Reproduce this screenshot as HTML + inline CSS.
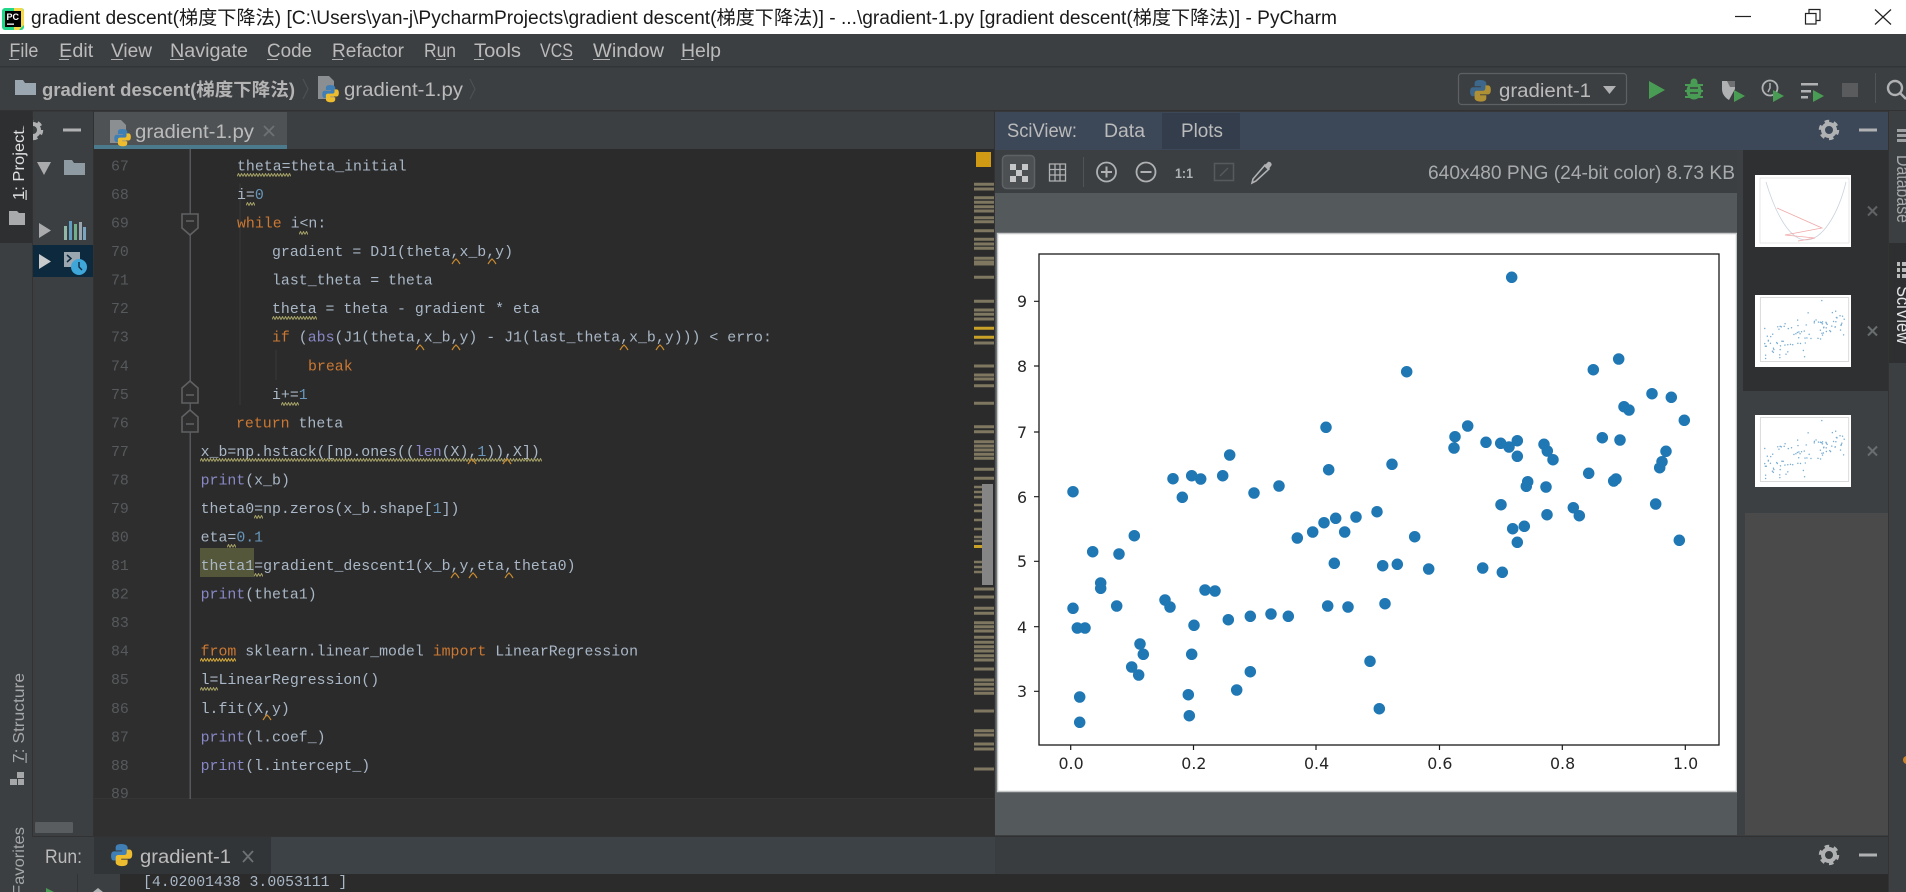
<!DOCTYPE html>
<html><head><meta charset="utf-8"><title>gradient descent - PyCharm</title>
<style>
html,body{margin:0;padding:0;background:#3c3f41;width:1906px;height:892px;overflow:hidden}
svg{display:block}
text{font-family:"Liberation Sans","Noto Sans CJK SC",sans-serif;white-space:pre}
.ui{fill:#bbbbbb;font-size:19px}
.code text{font-family:"Liberation Mono","Noto Sans CJK SC",monospace;font-size:14.88px;fill:#a9b7c6}
.ln text{font-family:"Liberation Mono",monospace;font-size:14.88px;fill:#565a5d}
.k{fill:#cc7832}.n{fill:#6897bb}.b{fill:#8888c6}
.plot text{font-family:"DejaVu Sans",sans-serif;font-size:15.8px;fill:#262626}
</style></head><body>
<svg width="1906" height="892" viewBox="0 0 1906 892" xmlns="http://www.w3.org/2000/svg">
<defs>
<g id="py"><path d="M10 0C5 0 4 2 4 4v3h7v1H2C0 8-1 10-1 13s1 5 3 5h3v-3c0-2 1-3 3-3h6c2 0 3-1 3-3V4c0-2-2-4-7-4z" fill="#3f7fb5"/><path d="M11 24c5 0 6-2 6-4v-3h-7v-1h9c2 0 3-2 3-5s-1-5-3-5h-3v3c0 2-1 3-3 3H7c-2 0-3 1-3 3v5c0 2 2 4 7 4z" fill="#eebc2f"/></g>
<g id="pyf"><path d="M0 0h11l5 5v18H0z" fill="#8c8f91"/><use href="#py" transform="translate(5 9) scale(.72)"/></g>
<g id="gear"><circle r="6" fill="none" stroke="#afb1b3" stroke-width="4"/><circle r="8.5" fill="none" stroke="#afb1b3" stroke-width="3.5" stroke-dasharray="4.4 4.5"/></g>
<g id="fold"><path d="M-8 -6L0 -13L8 -6V9H-8z" fill="#2f2f2f" stroke="#5f6163" stroke-width="1.6"/><path d="M-4 1H4" stroke="#5f6163" stroke-width="1.6"/></g>
<g id="foldd"><path d="M-8 -9H8V5L0 12L-8 5z" fill="#2f2f2f" stroke="#5f6163" stroke-width="1.6"/><path d="M-4 -2H4" stroke="#5f6163" stroke-width="1.6"/></g>
<path id="c" d="M-4 4L-2 1L0 -1L2 1L4 4" fill="none" stroke="#c98a2e" stroke-width="1.2"/>
<pattern id="w" width="6" height="4" patternUnits="userSpaceOnUse"><path d="M0 3.4L1.5 .6L3 3.4L4.5 .6L6 3.4" fill="none" stroke="#9d9a62" stroke-width="1.1"/></pattern>
<pattern id="wo" width="6" height="4" patternUnits="userSpaceOnUse"><path d="M0 3.4L1.5 .6L3 3.4L4.5 .6L6 3.4" fill="none" stroke="#c9a13a" stroke-width="1.1"/></pattern>
<path id="pts" fill="none" stroke="#1f77b4" stroke-width="11.5" stroke-linecap="round" d="M1073 491.7h0M1173 478.7h0M1191.7 475.7h0M1200.7 479h0M1222.7 475.7h0M1229.7 455h0M1182.3 497.3h0M1254 493h0M1279 486h0M1326 427.3h0M1328.7 469.7h0M1392 464.3h0M1406.7 371.7h0M1134.3 535.7h0M1092.7 551.7h0M1119 554h0M1100.7 583h0M1100.7 588.3h0M1073 608.3h0M1116.7 606h0M1077.3 628h0M1085 628h0M1165 600h0M1170 607h0M1205 590h0M1215 591h0M1194 625.3h0M1228.3 619.7h0M1250.3 616.3h0M1271 614h0M1288.3 616.3h0M1140 644h0M1143.3 654.3h0M1131.7 667h0M1138.7 675h0M1191.7 654.3h0M1250.3 671.7h0M1236.7 690h0M1188.3 694.7h0M1189.3 715.7h0M1079.7 697h0M1079.7 722.3h0M1297.3 538h0M1312.7 532h0M1324 522.7h0M1335.7 518.3h0M1344.7 532h0M1356 517h0M1377 511.7h0M1414.7 536.7h0M1334.3 563.3h0M1382.7 565.7h0M1397.3 564.3h0M1428.7 569h0M1327.7 606h0M1348 607h0M1385 603.7h0M1370 661.3h0M1379.3 708.7h0M1511.7 277.3h0M1593.3 369.7h0M1618.7 359h0M1652 393.7h0M1671.3 397.3h0M1624 406.7h0M1629 410h0M1684.3 420.3h0M1467.7 426h0M1455 436.7h0M1454 448h0M1486 442.3h0M1500.7 443.3h0M1509 447h0M1517.3 440.7h0M1517.3 456.3h0M1544 444.3h0M1547.3 451h0M1553 459.7h0M1602.3 437.7h0M1620 440h0M1666 451.3h0M1662 461.7h0M1659.7 467.7h0M1527.7 481.7h0M1526.3 486.3h0M1546 487h0M1588.7 473.3h0M1616 479h0M1613.7 481h0M1501 504.7h0M1655.7 504h0M1547 514.7h0M1573.3 507.7h0M1579.3 515.7h0M1512.7 528.7h0M1524.3 526.3h0M1517.3 542.3h0M1679.3 540.3h0M1482.7 568h0M1502.3 572.3h0"/>
</defs>

<!-- base -->
<rect width="1906" height="892" fill="#3c3f41"/>

<!-- title bar -->
<rect width="1906" height="34" fill="#fff"/>
<rect x="2" y="8" width="22" height="22" rx="3" fill="#21d789"/><path d="M14 8h8l2 3v14l-5 5h-5z" fill="#f5d94a"/>
<rect x="5" y="11" width="16" height="16" fill="#000"/>
<text x="6.5" y="20" font-size="9" font-weight="bold" fill="#fff">PC</text><rect x="7" y="23.5" width="7" height="1.3" fill="#fff"/>
<text x="31" y="24" font-size="19" fill="#1a1a1a" textLength="1306" lengthAdjust="spacingAndGlyphs">gradient descent(梯度下降法) [C:\Users\yan-j\PycharmProjects\gradient descent(梯度下降法)] - ...\gradient-1.py [gradient descent(梯度下降法)] - PyCharm</text>
<path d="M1735 16.5h16" stroke="#222" stroke-width="1.2"/>
<path d="M1805.5 13.5h10.5v10.5h-10.5zM1809 13.5v-4h11v11h-4" fill="none" stroke="#222" stroke-width="1.2"/>
<path d="M1875 9.5l16 15M1891 9.5l-16 15" stroke="#222" stroke-width="1.2"/>

<!-- menu -->
<g class="ui">
<text x="9.4" y="57" textLength="29" lengthAdjust="spacingAndGlyphs">File</text>
<text x="59.2" y="57" textLength="34" lengthAdjust="spacingAndGlyphs">Edit</text>
<text x="111" y="57" textLength="41" lengthAdjust="spacingAndGlyphs">View</text>
<text x="170" y="57" textLength="78" lengthAdjust="spacingAndGlyphs">Navigate</text>
<text x="267" y="57" textLength="45" lengthAdjust="spacingAndGlyphs">Code</text>
<text x="332" y="57" textLength="72" lengthAdjust="spacingAndGlyphs">Refactor</text>
<text x="424" y="57" textLength="32" lengthAdjust="spacingAndGlyphs">Run</text>
<text x="474" y="57" textLength="47" lengthAdjust="spacingAndGlyphs">Tools</text>
<text x="540" y="57" textLength="33" lengthAdjust="spacingAndGlyphs">VCS</text>
<text x="593" y="57" textLength="71" lengthAdjust="spacingAndGlyphs">Window</text>
<text x="681" y="57" textLength="40" lengthAdjust="spacingAndGlyphs">Help</text>
</g>
<path d="M9 59.5h10M59 59.5h10M111 59.5h12M170 59.5h14M267 59.5h11M332 59.5h11M436 59.5h10M474 59.5h10M561 59.5h12M593 59.5h17M681 59.5h13" stroke="#b0b0b0" stroke-width="1"/>
<rect y="66" width="1906" height="1.5" fill="#323537"/>

<!-- nav bar -->
<path d="M15 80h8l2 3h11v12H15z" fill="#9aa7b0"/>
<text x="42" y="96" font-size="18" font-weight="bold" fill="#b4b4b4" textLength="253" lengthAdjust="spacingAndGlyphs">gradient descent(梯度下降法)</text>
<path d="M303 79l5 10-5 10" fill="none" stroke="#4c4f51" stroke-width="1.3"/>
<use href="#pyf" transform="translate(318 76)"/>
<text x="344" y="96" class="ui" textLength="119" lengthAdjust="spacingAndGlyphs">gradient-1.py</text>
<path d="M470 79l5 10-5 10" fill="none" stroke="#4c4f51" stroke-width="1.3"/>
<rect x="1458.5" y="73.5" width="168" height="31" rx="3" fill="#3c3f41" stroke="#5e6163" stroke-width="1.2"/>
<use href="#py" transform="translate(1471 80) scale(.9)" opacity=".65"/>
<text x="1499" y="97" class="ui" textLength="92" lengthAdjust="spacingAndGlyphs">gradient-1</text>
<path d="M1603 86h13l-6.500 8z" fill="#afb1b3"/>
<path d="M1649 81l16 9-16 9z" fill="#499c54"/>
<g fill="#499c54"><ellipse cx="1694" cy="91" rx="7.500" ry="8.500"/><circle cx="1694" cy="82" r="3.500"/><path d="M1685 85h18M1685 91h18M1685 97h18" stroke="#499c54" stroke-width="2"/></g>
<path d="M1690 88h8M1690 93h8" stroke="#3c3f41" stroke-width="1.500"/>
<path d="M1722 81h13v8l-6 11c-5-3-7-7-7-11z" fill="#afb1b3"/><path d="M1727 81h8v6h-5z" fill="#6e7072"/><path d="M1734 90l11 6-11 6z" fill="#499c54"/>
<circle cx="1770" cy="88" r="7.500" fill="none" stroke="#afb1b3" stroke-width="1.800"/><path d="M1770 83v5l-2 4" stroke="#afb1b3" stroke-width="1.500" fill="none"/><path d="M1773 90l11 6-11 6z" fill="#499c54"/>
<path d="M1801 83h17v2.500h-17zM1801 90h10v2.500h-10zM1801 96h7v2.500h-7z" fill="#afb1b3"/><path d="M1813 90l11 6-11 6z" fill="#499c54"/>
<rect x="1842" y="83" width="16" height="14" fill="#5a5b5c"/>
<rect x="1875" y="73" width="1" height="30" fill="#515456"/>
<circle cx="1895" cy="88" r="7" fill="none" stroke="#afb1b3" stroke-width="2.400"/><path d="M1900 93l6 6" stroke="#afb1b3" stroke-width="2.400"/>
<rect y="110" width="1906" height="1.500" fill="#323232"/>

<!-- left stripe -->
<rect x="0" y="111" width="32" height="132" fill="#2d2f31"/>
<rect x="32" y="111" width="1" height="726" fill="#323232"/>
<text transform="translate(24 200) rotate(-90)" font-size="16" fill="#e0e0e0" textLength="70" lengthAdjust="spacingAndGlyphs">1: Project</text>
<rect x="25.500" y="190" width="1.200" height="10" fill="#e0e0e0"/>
<path d="M9 211h8l2 2h6v12H9z" fill="#a8aaac"/>
<text transform="translate(24 763) rotate(-90)" font-size="16" fill="#a5a7a9" textLength="90" lengthAdjust="spacingAndGlyphs">7: Structure</text>
<rect x="25.500" y="753" width="1.200" height="10" fill="#a5a7a9"/>
<path d="M17 772h7v6h-7zM10 779h7v6h-7zM18 779h6v6h-6z" fill="#a5a7a9"/>
<text transform="translate(24 895) rotate(-90)" font-size="16" fill="#a5a7a9" textLength="68" lengthAdjust="spacingAndGlyphs">Favorites</text>

<!-- project panel -->
<g clip-path="none">
<circle cx="33" cy="130" r="6" fill="none" stroke="#afb1b3" stroke-width="4"/><circle cx="33" cy="130" r="8.500" fill="none" stroke="#afb1b3" stroke-width="3.500" stroke-dasharray="4.400 4.500"/><rect x="24" y="118" width="9" height="24" fill="#2d2f31"/>
</g>
<rect x="63" y="128.500" width="18" height="3" fill="#afb1b3"/>
<path d="M37 162h14l-7 13z" fill="#a9abad"/>
<path d="M64 160h8l2 3h11v12H64z" fill="#8f9ba3"/>
<path d="M39 223l12 7.500-12 7.500z" fill="#a9abad"/>
<path d="M64 226h3v14h-3z" fill="#8fb8a6"/><path d="M69 221h3v19h-3z" fill="#5f9ec0"/><path d="M74 224h3v16h-3z" fill="#6fb08a"/><path d="M79 222h3v18h-3z" fill="#9aa7b0"/><path d="M83 227h3v13h-3z" fill="#7aa5c0"/>
<rect x="33" y="245" width="60" height="32" fill="#0d293e"/>
<path d="M39 254l12 7.500-12 7.500z" fill="#c9cbcd"/>
<rect x="64" y="252" width="16" height="15" fill="#9aa7b0"/><path d="M67 255l4 3.500-4 3.500" fill="none" stroke="#0d293e" stroke-width="1.500"/>
<circle cx="79" cy="267" r="8" fill="#3ea6d8"/><path d="M79 262v5l3 3" fill="none" stroke="#0d293e" stroke-width="1.400"/>
<rect x="35" y="822" width="38" height="11" rx="1" fill="#5a5d5f"/>
<rect x="93" y="111" width="1" height="726" fill="#323232"/>

<!-- editor tabs -->
<rect x="94" y="111.500" width="901" height="37.500" fill="#3c3f41"/>
<rect x="94" y="112" width="193" height="33" fill="#4e5254"/>
<rect x="94" y="145" width="193" height="4" fill="#4a7a8c"/>
<use href="#pyf" transform="translate(110 120)"/>
<text x="135" y="138" class="ui" textLength="119" lengthAdjust="spacingAndGlyphs">gradient-1.py</text>
<path d="M264 126l10 10M274 126l-10 10" stroke="#6e7173" stroke-width="1.800"/>

<!-- editor -->
<rect x="94" y="149" width="901" height="650" fill="#2b2b2b"/>
<rect x="94" y="149" width="96" height="650" fill="#2e2e2e"/>
<rect x="94" y="799" width="901" height="38" fill="#303030"/>
<rect x="94" y="798" width="901" height="1" fill="#353535"/>
<rect x="189.500" y="149" width="1.500" height="650" fill="#555759"/>
<path d="M240 183.500V405M276 350V380" stroke="#3a3a3a" stroke-width="1"/>
<use href="#foldd" transform="translate(190 223)"/><use href="#fold" transform="translate(190 394)"/><use href="#fold" transform="translate(190 423)"/>
<rect x="200" y="548" width="54" height="29" fill="#55573a"/>

<g class="ln" transform="translate(0 -1)">
<text x="111" y="171.500">67</text><text x="111" y="200">68</text><text x="111" y="228.600">69</text><text x="111" y="257.100">70</text><text x="111" y="285.700">71</text><text x="111" y="314.200">72</text><text x="111" y="342.700">73</text><text x="111" y="371.300">74</text><text x="111" y="399.800">75</text><text x="111" y="428.400">76</text><text x="111" y="456.900">77</text><text x="111" y="485.400">78</text><text x="111" y="514">79</text><text x="111" y="542.500">80</text><text x="111" y="571.100">81</text><text x="111" y="599.600">82</text><text x="111" y="628.100">83</text><text x="111" y="656.700">84</text><text x="111" y="685.200">85</text><text x="111" y="713.800">86</text><text x="111" y="742.300">87</text><text x="111" y="770.800">88</text><text x="111" y="799">89</text>
</g>

<g class="code" transform="translate(0 -1)">
<text x="237" y="171.500">theta=theta_initial</text>
<text x="237" y="200">i=<tspan class="n">0</tspan></text>
<text x="237" y="228.600"><tspan class="k">while</tspan> i&lt;n:</text>
<text x="272" y="257.100">gradient = DJ1(theta,x_b,y)</text>
<text x="272" y="285.700">last_theta = theta</text>
<text x="272" y="314.200">theta = theta - gradient * eta</text>
<text x="272" y="342.700"><tspan class="k">if</tspan> (<tspan class="b">abs</tspan>(J1(theta,x_b,y) - J1(last_theta,x_b,y))) &lt; erro:</text>
<text x="308" y="371.300" class="k" style="fill:#cc7832">break</text>
<text x="272" y="399.800">i+=<tspan class="n">1</tspan></text>
<text x="236" y="428.400"><tspan class="k">return</tspan> theta</text>
<text x="200.600" y="456.900">x_b=np.hstack([np.ones((<tspan class="b">len</tspan>(X),<tspan class="n">1</tspan>)),X])</text>
<text x="200.600" y="485.400"><tspan class="b">print</tspan>(x_b)</text>
<text x="200.600" y="514">theta0=np.zeros(x_b.shape[<tspan class="n">1</tspan>])</text>
<text x="200.600" y="542.500">eta=<tspan class="n">0.1</tspan></text>
<text x="200.600" y="571.100">theta1=gradient_descent1(x_b,y,eta,theta0)</text>
<text x="200.600" y="599.600"><tspan class="b">print</tspan>(theta1)</text>
<text x="200.600" y="656.700"><tspan class="k">from</tspan> sklearn.linear_model <tspan class="k">import</tspan> LinearRegression</text>
<text x="200.600" y="685.200">l=LinearRegression()</text>
<text x="200.600" y="713.800">l.fit(X,y)</text>
<text x="200.600" y="742.300"><tspan class="b">print</tspan>(l.coef_)</text>
<text x="200.600" y="770.800"><tspan class="b">print</tspan>(l.intercept_)</text>
</g>

<!-- squiggles -->
<rect transform="translate(237 173)" width="54" height="4" fill="url(#w)"/>
<rect transform="translate(246 202)" width="9" height="4" fill="url(#w)"/>
<rect transform="translate(299 231)" width="9" height="4" fill="url(#w)"/>
<rect transform="translate(272 316)" width="45" height="4" fill="url(#w)"/>
<rect transform="translate(281 402)" width="18" height="4" fill="url(#w)"/>
<rect transform="translate(200 458)" width="342" height="4" fill="url(#w)"/>
<rect transform="translate(254 515)" width="9" height="4" fill="url(#w)"/>
<rect transform="translate(227 544)" width="9" height="4" fill="url(#w)"/>
<rect transform="translate(254 573)" width="9" height="4" fill="url(#w)"/>
<rect transform="translate(200 658)" width="36" height="4" fill="url(#wo)"/>
<rect transform="translate(200 687)" width="18" height="4" fill="url(#w)"/>
<use href="#c" x="456" y="260"/><use href="#c" x="492" y="260"/>
<use href="#c" x="420" y="346"/><use href="#c" x="456" y="346"/><use href="#c" x="624" y="346"/><use href="#c" x="660" y="346"/>
<use href="#c" x="472" y="460"/><use href="#c" x="507" y="460"/>
<use href="#c" x="455" y="574"/><use href="#c" x="473" y="574"/><use href="#c" x="509" y="574"/>
<use href="#c" x="267" y="716"/>

<!-- scroll marks -->
<rect x="976" y="152" width="15" height="15" fill="#d19a14"/>
<path fill="none" stroke="#7f7760" stroke-width="3" d="M974 184.300h20M974 189h20M974 197.700h20M974 202.300h20M974 206.700h20M974 211h20M974 217.700h20M974 221.700h20M974 230.700h20M974 239.300h20M974 244h20M974 248.300h20M974 258.300h20M974 262h20M974 264h20M974 277.300h20M974 301.300h20M974 310h20M974 314.300h20M974 319h20M974 343h20M974 366h20M974 375h20M974 379h20M974 385.700h20M974 403.300h20M974 426.700h20M974 431.700h20M974 441.700h20M974 446h20M974 450h20M974 454.300h20M974 458.300h20M974 469.300h20M974 478.300h20M974 589h20M974 597h20M974 608.300h20M974 613.300h20M974 622.700h20M974 626.700h20M974 631h20M974 637.300h20M974 642.300h20M974 646.700h20M974 651h20M974 655.700h20M974 660h20M974 669h20M974 680h20M974 684.300h20M974 689h20M974 693.300h20M974 711h20M974 730.700h20M974 735h20M974 744h20M974 749h20M974 769h20"/>
<path fill="none" stroke="#c9a227" stroke-width="3" d="M974 328.300h20M974 337.300h20"/>
<rect x="982" y="484" width="11" height="101" fill="#858585"/>
<path fill="none" stroke="#7f7760" stroke-width="2.500" d="M974 487h8M974 492h8M974 497h8M974 505h8M974 511h8M974 520h8M974 529h8M974 537h8M974 541h8M974 562h8M974 567h8M974 572h8"/>
<rect x="974" y="545" width="8" height="3" fill="#c9a227"/>

<!-- SciView header -->
<rect x="995" y="112" width="893" height="38" fill="#3c4757"/>
<rect x="994" y="111" width="1" height="724" fill="#323232"/>
<text x="1007" y="137" font-size="19" fill="#bbbbbb" textLength="70" lengthAdjust="spacingAndGlyphs">SciView:</text>
<text x="1104" y="137" font-size="19" fill="#bbbbbb" textLength="41" lengthAdjust="spacingAndGlyphs">Data</text>
<rect x="1162" y="113" width="78" height="36" fill="#333d4b"/>
<text x="1181" y="137" font-size="19" fill="#bbbbbb" textLength="42" lengthAdjust="spacingAndGlyphs">Plots</text>
<use href="#gear" x="1829" y="130"/>
<rect x="1859" y="128.500" width="18" height="3" fill="#afb1b3"/>

<!-- SciView toolbar -->
<rect x="995" y="150" width="744" height="43" fill="#3c3f41"/>
<rect x="1002.500" y="155.500" width="32" height="33" rx="4" fill="#4c5052" stroke="#5e6265" stroke-width="1.500"/>
<path d="M1010 164h6v6h-6zM1022 164h6v6h-6zM1016 170h6v6h-6zM1010 176h6v6h-6zM1022 176h6v6h-6z" fill="#c4c6c8"/>
<path d="M1049.500 164h16v17h-16zM1055 164v17M1060 164v17M1049.500 169.500h16M1049.500 175h16" fill="none" stroke="#afb1b3" stroke-width="1.300"/>
<rect x="1083" y="157" width="1" height="30" fill="#515456"/>
<circle cx="1106.500" cy="172" r="9.500" fill="none" stroke="#afb1b3" stroke-width="1.800"/><path d="M1101 172h11M1106.500 166.500v11" stroke="#afb1b3" stroke-width="2"/>
<circle cx="1146" cy="172" r="9.500" fill="none" stroke="#afb1b3" stroke-width="1.800"/><path d="M1140.500 172h11" stroke="#afb1b3" stroke-width="2"/>
<text x="1175" y="178" font-size="14" font-weight="bold" fill="#afb1b3" textLength="18" lengthAdjust="spacingAndGlyphs">1:1</text>
<rect x="1214.500" y="163.500" width="19" height="17" fill="none" stroke="#565a5c" stroke-width="1.500"/><path d="M1220 176l8-8" stroke="#565a5c" stroke-width="1.300"/>
<path d="M1253 179l12-14 4 4-13 12-4 2z" fill="none" stroke="#afb1b3" stroke-width="1.600"/><path d="M1264 166l4-4c2-1 5 2 3 4l-3 4z" fill="#afb1b3"/>
<text x="1428" y="179" font-size="19" fill="#a8aaac" textLength="307" lengthAdjust="spacingAndGlyphs">640x480 PNG (24-bit color) 8.73 KB</text>

<!-- image area -->
<rect x="995" y="193" width="742" height="642" fill="#54595b"/>
<rect x="997.500" y="233.500" width="739" height="558" fill="#fff" stroke="#c4c6c7" stroke-width="1.500"/>
<g class="plot">
<rect x="1039" y="254" width="680" height="491" fill="none" stroke="#1a1a1a" stroke-width="1.300"/>
<path d="M1070.700 745v5M1193.500 745v5M1316 745v5M1439.500 745v5M1562.300 745v5M1685.300 745v5M1034 301.300h5M1034 366h5M1034 432h5M1034 496.700h5M1034 561.300h5M1034 626.700h5M1034 691.300h5" stroke="#1a1a1a" stroke-width="1.200"/>
<text x="1058.500" y="769">0.0</text><text x="1181.300" y="769">0.2</text><text x="1304" y="769">0.4</text><text x="1427.300" y="769">0.6</text><text x="1550" y="769">0.8</text><text x="1673" y="769">1.0</text>
<text x="1017" y="307">9</text><text x="1017" y="372">8</text><text x="1017" y="438">7</text><text x="1017" y="503">6</text><text x="1017" y="567">5</text><text x="1017" y="633">4</text><text x="1017" y="697">3</text>
<use href="#pts"/>
</g>

<!-- thumbs -->
<rect x="1737" y="150" width="151" height="685" fill="#3d4042"/>
<rect x="1743" y="150" width="145" height="241" fill="#2f3031"/>
<rect x="1745" y="513" width="143" height="322" fill="#4a4a4a"/>
<rect x="1755" y="175" width="96" height="72" fill="#fff"/>
<rect x="1760" y="178" width="89" height="65" fill="none" stroke="#e2e2e2" stroke-width=".8"/>
<path d="M1766 182C1776 215 1790 240 1806 240C1822 240 1838 215 1846 182" fill="none" stroke="#c9d3de" stroke-width=".8"/>
<path d="M1777 208L1822 228L1785 235L1815 238L1798 241" fill="none" stroke="#f0a8a8" stroke-width=".8"/>
<path d="M1868 206.500l9 9M1877 206.500l-9 9" stroke="#606365" stroke-width="2"/>
<rect x="1755" y="295" width="96" height="72" fill="#fff"/>
<g transform="translate(1625.260 264.580) scale(.13)"><rect x="1039" y="254" width="680" height="491" fill="none" stroke="#d0d0d0" stroke-width="6"/><use href="#pts" opacity=".6"/></g>
<path d="M1868 326.500l9 9M1877 326.500l-9 9" stroke="#6a6d6f" stroke-width="2"/>
<rect x="1755" y="415" width="96" height="72" fill="#fff"/>
<g transform="translate(1625.260 384.580) scale(.13)"><rect x="1039" y="254" width="680" height="491" fill="none" stroke="#d0d0d0" stroke-width="6"/><use href="#pts" opacity=".6"/></g>
<path d="M1868 446.500l9 9M1877 446.500l-9 9" stroke="#6a6d6f" stroke-width="2"/>

<!-- right stripe -->
<rect x="1888" y="111" width="18" height="781" fill="#3c3f41"/>
<rect x="1888" y="243" width="18" height="120" fill="#2d2f31"/>
<rect x="1888" y="111" width="1" height="781" fill="#333"/>
<path d="M1897 129h9v3h-9zM1897 134h9v3h-9zM1897 139h9v3h-9z" fill="#9ea0a2"/>
<text transform="translate(1897 155) rotate(90)" font-size="18" fill="#a5a7a9" textLength="68" lengthAdjust="spacingAndGlyphs">Database</text>
<path d="M1897 262h3v4h-3zM1902 262h4v4h-4zM1897 268h3v4h-3zM1902 268h4v4h-4zM1897 274h3v4h-3zM1902 274h4v4h-4z" fill="#bbb"/>
<text transform="translate(1897 286) rotate(90)" font-size="18" fill="#e4e4e4" textLength="58" lengthAdjust="spacingAndGlyphs">SciView</text>
<circle cx="1907" cy="760" r="4" fill="#c9832e"/>

<!-- run tool window -->
<rect x="33" y="874" width="87" height="18" fill="#3c3f41"/>
<rect x="77" y="874" width="1" height="18" fill="#333"/>
<rect x="120" y="874" width="1768" height="18" fill="#2b2b2b"/>
<rect x="33" y="836" width="1855" height="1.500" fill="#323232"/>
<rect x="33" y="837" width="962" height="37" fill="#3c4245"/>
<rect x="995" y="837" width="893" height="37" fill="#3a3d3f"/>
<rect x="33" y="837" width="61" height="37" fill="#3c3f41"/>
<rect x="94" y="837" width="177" height="37" fill="#323537"/>
<text x="45" y="863" class="ui" textLength="37" lengthAdjust="spacingAndGlyphs">Run:</text>
<use href="#py"  transform="translate(112 844) scale(.92)"/>
<text x="140" y="863" class="ui" textLength="91" lengthAdjust="spacingAndGlyphs">gradient-1</text>
<path d="M243 851l10 11M253 851l-10 11" stroke="#6e7173" stroke-width="1.800"/>
<use href="#gear" x="1829" y="855"/>
<rect x="1859" y="853.500" width="18" height="3" fill="#afb1b3"/>
<svg x="120" y="875" width="400" height="17"><text x="23" y="11" style="font-family:'Liberation Mono',monospace;font-size:14.800px;fill:#a9b7c6">[4.02001438 3.0053111 ]</text></svg>
<path d="M46 888l8 4h-8z" fill="#499c54"/><path d="M93 892l5-4 5 4z" fill="#afb1b3"/>
</svg>
</body></html>
